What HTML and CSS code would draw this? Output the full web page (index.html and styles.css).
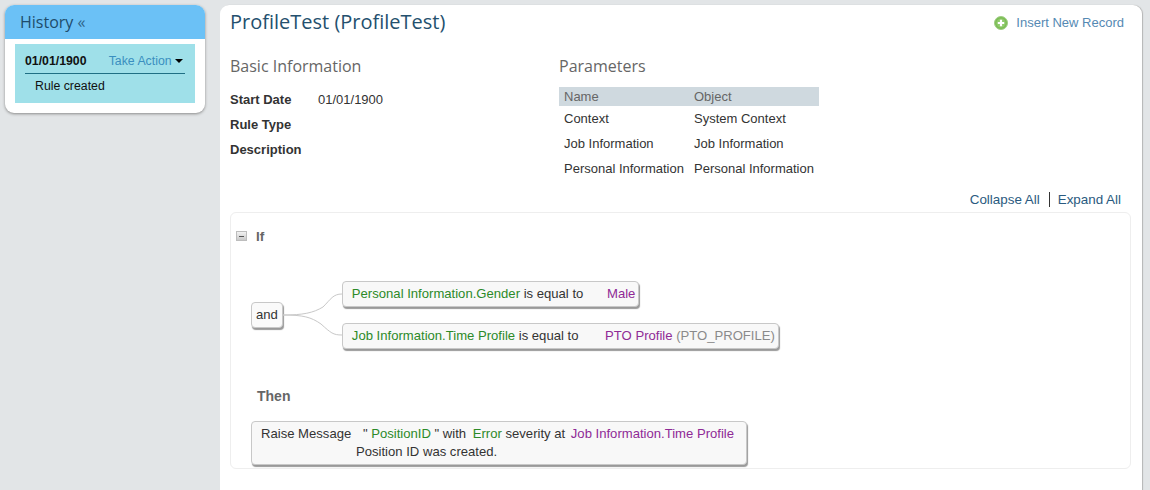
FILE: index.html
```html
<!DOCTYPE html>
<html lang="en">
<head>
<meta charset="utf-8">
<title>ProfileTest</title>
<link rel="stylesheet" href="styles.css">
</head>
<body>
<div class="page">
  <aside class="history">
    <h2 class="history-title">History <span class="chev">«</span></h2>
    <div class="history-body">
      <div class="entry">
        <div class="entry-head"><b>01/01/1900</b><span class="take">Take Action <i class="caret"></i></span></div>
        <div class="entry-text">Rule created</div>
      </div>
    </div>
  </aside>
  <main class="main">
    <header class="top">
      <h1>ProfileTest (ProfileTest)</h1>
      <a class="insert">
        <svg class="plus" width="14" height="14" viewBox="0 0 14 14"><circle cx="7" cy="7" r="6.5" fill="#7cbc55" stroke="#9fce84"/><circle cx="7" cy="7" r="4.6" fill="#8fca6b"/><path d="M7 3.8v6.4M3.8 7h6.4" stroke="#fff" stroke-width="2.2"/></svg>
        Insert New Record</a>
    </header>
    <section class="info">
      <div class="basic">
        <h3>Basic Information</h3>
        <div class="field"><b>Start Date</b><span>01/01/1900</span></div>
        <div class="field"><b>Rule Type</b></div>
        <div class="field"><b>Description</b></div>
      </div>
      <div class="params">
        <h3>Parameters</h3>
        <table>
          <thead><tr><th>Name</th><th>Object</th></tr></thead>
          <tbody>
            <tr><td>Context</td><td>System Context</td></tr>
            <tr><td>Job Information</td><td>Job Information</td></tr>
            <tr><td>Personal Information</td><td>Personal Information</td></tr>
          </tbody>
        </table>
      </div>
    </section>
    <div class="links"><a>Collapse All</a><a class="sep">Expand All</a></div>
    <section class="rule">
      <div class="if-head"><span class="minus"></span><b>If</b></div>
      <div class="tree">
        <svg class="wires" width="60" height="68" viewBox="0 0 60 68"><path d="M0 34C20 34 30 32 40 26 48 18 50 13 59 13M0 34C20 34 28 36 38 43 48 52 50 54 59 54" fill="none" stroke="#c8c8c8"/></svg>
        <div class="box and">and</div>
        <div class="conds">
          <div class="box"><span class="g">Personal Information.Gender</span> is equal to <span class="p gap">Male</span></div>
          <div class="box"><span class="g">Job Information.Time Profile</span> is equal to <span class="p gap2">PTO Profile</span> <span class="m">(PTO_PROFILE)</span></div>
        </div>
      </div>
      <h4>Then</h4>
      <div class="box action">
        <div>Raise Message <span class="q">"</span> <span class="g">PositionID</span> " with <span class="g err">Error</span> severity at <span class="p at">Job Information.Time Profile</span></div>
        <div class="msg">Position ID was created.</div>
      </div>
    </section>
  </main>
</div>
</body>
</html>
```
FILE: styles.css
```css
html, body { margin: 0; padding: 0; height: 490px; overflow: hidden; }
body { background: #e2e5e7; font: 13px/15px "Liberation Sans", Arial, sans-serif; color: #333; }
.page { display: flex; align-items: flex-start; gap: 15px; padding: 5px 8px 0 5px; }
.history { width: 200px; flex: none; height: 108px; background: #fff; border-radius: 9px; box-shadow: 0 1px 3px #8a8a8a; overflow: hidden; font-size: 12.3px; }
.history-title { margin: 0; height: 34px; padding-left: 15px; background: #6bc1f6; font: 400 16px/34px "Open Sans", sans-serif; color: #1e4c6b; }
.chev { font-size: 16px; color: #2f6489; }
.history-body { padding: 5px 10px; }
.entry { height: 59px; padding: 10px 10px 0; box-sizing: border-box; background: #9fe0e9; color: #111; }
.entry-head { display: flex; justify-content: space-between; height: 19px; border-bottom: 1px solid #1f6f84; line-height: 15px; }
.take { margin-right: 2px; color: #3a8fc0; }
.caret { display: inline-block; width: 0; height: 0; border: 4px solid transparent; border-top-color: #000; border-bottom: 0; vertical-align: 2px; }
.entry-text { padding: 5px 10px 0; }
.main { flex: 1; height: 500px; padding: 0 11px 0 10px; background: #fff; border-radius: 9px 9px 0 0; box-shadow: 1px 0 1px #b5b5b5; box-sizing: border-box; }
.top { display: flex; justify-content: space-between; height: 33px; }
h1 { margin: 5px 0 0; font: 400 20px/24px "Open Sans", sans-serif; color: #24506e; }
.insert { display: flex; align-items: center; gap: 8px; height: 15px; margin: 10px 7px 0 0; color: #5589b3; }
.plus { flex: none; }
.info { display: flex; height: 154px; padding-top: 16px; box-sizing: border-box; }
.basic { width: 329px; flex: none; }
h3 { margin: 0; font: 400 16px/24px "Open Sans", sans-serif; color: #666; }
.field { display: flex; height: 25px; line-height: 25px; color: #333; }
.basic h3 { margin-bottom: 9px; }
.field b { width: 88px; }
.params h3 { margin-bottom: 9px; }
table { border-collapse: collapse; width: 260px; }
th { padding: 0 5px; height: 19px; background: #cfd9df; font-weight: 400; text-align: left; color: #666; }
td { padding: 0 5px; height: 25px; white-space: nowrap; color: #333; }
th:first-child, td:first-child { width: 120px; }
.links { display: flex; justify-content: flex-end; height: 20px; padding: 0 10px 0 0; font-size: 13.4px; line-height: 15px; color: #2a5a80; }
.sep { margin-left: 9px; padding-left: 8px; border-left: 1px solid #333; height: 15px; }
.rule { height: 257px; border: 1px solid #eeeeee; border-radius: 6px; box-sizing: border-box; padding: 15px 5px 0; }
.if-head { display: flex; align-items: center; gap: 9px; height: 16px; }
.if-head b { color: #666; font-size: 13.5px; }
.minus { position: relative; width: 9px; height: 8px; border: 1px solid #bdbdbd; background: linear-gradient(#f2f2f2, #c9c9c9); }
.minus::after { content: ""; position: absolute; left: 2px; right: 2px; top: 4px; height: 1px; background: #555; }
.tree { position: relative; display: flex; align-items: center; margin: 37px 0 0 15px; height: 68px; }
.wires { position: absolute; left: 32px; top: 0; }
.box { padding: 4px 3px 5px 9px; height: 15px; line-height: 15px; background: #f8f8f8; border: 1px solid #c8c8c8; border-radius: 4px; box-shadow: 1px 2px 1px #999; white-space: nowrap; color: #333; font-size: 13.1px; }
.and { flex: none; padding: 4px 4px 5px 4px; background: #fafafa; }
.conds { display: flex; flex-direction: column; align-items: flex-start; gap: 16px; margin-left: 59px; }
.g { color: #2c8a28; }
.p { color: #8f2a96; }
.m { color: #8a8a8a; }
.gap { margin-left: 20px; }
.gap2 { margin-left: 23px; }
h4 { margin: 39px 0 0 21px; font-weight: 700; line-height: 16px; font-size: 14px; color: #666; }
.action { width: 485px; height: 36px; margin: 17px 0 0 15px; padding: 3px 0 3px 9px; line-height: 18px; }
.q { margin-left: 8px; }
.err { margin-left: 3px; }
.at { margin-left: 2px; }
.msg { margin-left: 95px; }
```
